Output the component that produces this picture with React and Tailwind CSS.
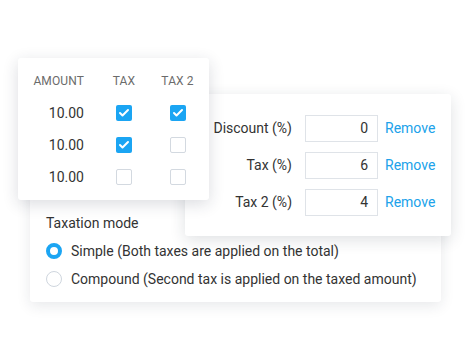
import { Check } from 'lucide-react';

const rows = [
  { amount: '10.00', tax: true, tax2: true },
  { amount: '10.00', tax: true, tax2: false },
  { amount: '10.00', tax: false, tax2: false },
];

const rates = [
  { label: 'Discount (%)', value: '0' },
  { label: 'Tax (%)', value: '6' },
  { label: 'Tax 2 (%)', value: '4' },
];

function Box({ checked }) {
  return checked ? (
    <div className="w-4 h-4 rounded-[2px] bg-[#1ba5f3] flex items-center justify-center">
      <Check className="w-3 h-3 text-white" strokeWidth={4} />
    </div>
  ) : (
    <div className="w-4 h-4 rounded-[2px] border border-[#d3d9e0] bg-white" />
  );
}

function Radio({ checked }) {
  return checked ? (
    <div className="w-4 h-4 rounded-full border-[4px] border-[#1ba5f3] bg-white shrink-0" />
  ) : (
    <div className="w-4 h-4 rounded-full border border-[#cfd6de] bg-white shrink-0" />
  );
}

export default function App() {
  return (
    <div className="relative w-[470px] h-[360px] bg-white overflow-hidden font-['Roboto',sans-serif] text-[#333]">
      {/* back card: taxation mode */}
      <div className="ml-[30px] mt-[150px] w-[411px] h-[152px] bg-white rounded-[3px] shadow-[0_4px_14px_rgba(30,40,60,0.10)] flex flex-col justify-end pl-4 pb-[9px]">
        <div className="text-[14px] leading-none mb-[7px]">Taxation mode</div>
        <div className="flex items-center gap-[9px] h-[28px] text-[14px]">
          <Radio checked />
          <span>Simple (Both taxes are applied on the total)</span>
        </div>
        <div className="flex items-center gap-[9px] h-[28px] text-[14px]">
          <Radio />
          <span>Compound (Second tax is applied on the taxed amount)</span>
        </div>
      </div>

      {/* rates card */}
      <div className="absolute left-[185px] top-[94px] w-[266px] h-[142px] bg-white rounded-[3px] shadow-[0_4px_16px_rgba(30,40,60,0.14)] pt-[21px] flex flex-col gap-[10px]">
        {rates.map((r) => (
          <div key={r.label} className="flex items-center h-[27px] text-[14px]">
            <div className="w-[107px] text-right">{r.label}</div>
            <div className="ml-[13px] w-[73px] h-[27px] border border-[#dfe3e8] flex items-center justify-end pr-[9px]">{r.value}</div>
            <div className="ml-[7px] text-[#20a2ea]">Remove</div>
          </div>
        ))}
      </div>

      {/* amounts card */}
      <div className="absolute left-[18px] top-[58px] w-[191px] h-[142px] bg-white rounded-[3px] shadow-[0_4px_16px_rgba(30,40,60,0.16)] pl-[17px] pt-[7px]">
        <div className="flex items-center h-8 text-[12px] text-[#6b6b6b] tracking-[0.01em]">
          <div className="w-[49px] flex justify-end">AMOUNT</div>
          <div className="w-[80px] flex justify-center">TAX</div>
          <div className="w-[27px] flex justify-center whitespace-nowrap">TAX 2</div>
        </div>
        {rows.map((r, i) => (
          <div key={i} className="flex items-center h-8 text-[14px]">
            <div className="w-[49px] text-right">{r.amount}</div>
            <div className="w-[80px] flex justify-center"><Box checked={r.tax} /></div>
            <div className="w-[27px] flex justify-center"><Box checked={r.tax2} /></div>
          </div>
        ))}
      </div>
    </div>
  );
}
